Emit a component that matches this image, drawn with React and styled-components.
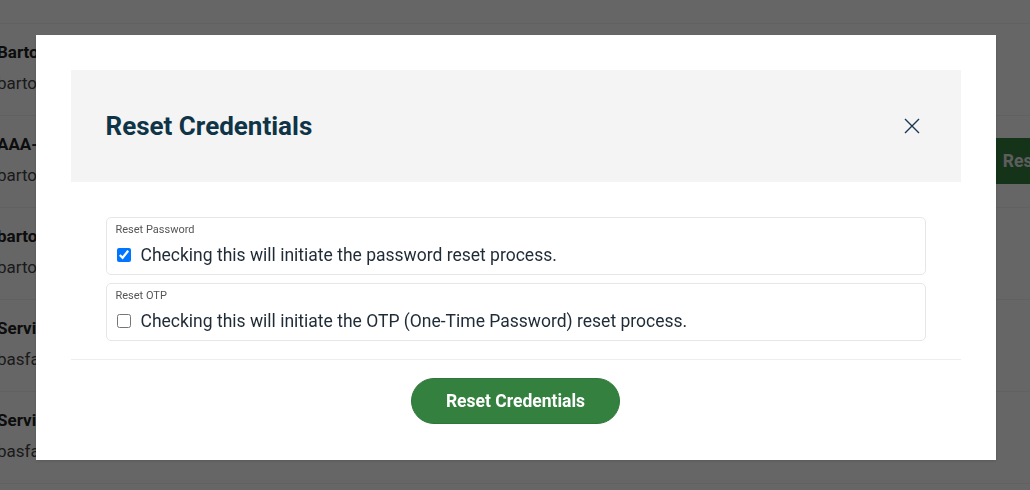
import React, { useState } from 'react';
import styled, { createGlobalStyle } from 'styled-components';

const GlobalStyle = createGlobalStyle`
  html, body {
    margin: 0;
    padding: 0;
    height: 100%;
    overflow: hidden;
    background: #fff;
    font-family: Roboto, "Liberation Sans", Arial, sans-serif;
  }
`;

const accounts = [
  { name: 'Bartosz Admin', email: 'bartosz.kowalski@gmail.com' },
  { name: 'Bartosz Kowalski', email: 'bartosz.kowalski@gmail.com' },
  { name: 'AAA-Bartosz Test', email: 'bartosz.test@gmail.com', action: true },
  { name: 'bartosz.user', email: 'bartosz.user@gmail.com' },
  { name: 'Service Account', email: 'basfagent.service@gmail.com' },
  { name: 'Service Agent', email: 'basfagent.support@gmail.com' },
];

const List = styled.main`
  margin-top: -68px;
  margin-left: -3px;
  margin-right: -130px;
`;

const Row = styled.div`
  height: 92px;
  box-sizing: border-box;
  padding-top: 16px;
  border-bottom: 1px solid #f2f2f2;
  display: flex;
  justify-content: space-between;
  align-items: flex-start;
`;

const Info = styled.div`
  display: flex;
  flex-direction: column;
  gap: 7px;
`;

const Name = styled.div`
  font-size: 17px;
  line-height: 24px;
  font-weight: 700;
  color: #222;
`;

const Email = styled.div`
  font-size: 17px;
  line-height: 24px;
  color: #444;
`;

const RowButton = styled.button`
  margin-top: 6px;
  height: 46px;
  padding: 0 18px;
  border: none;
  background: #34803f;
  color: #e8e8e8;
  font-family: inherit;
  font-size: 17.5px;
  font-weight: 700;
`;

const Overlay = styled.div`
  position: fixed;
  inset: 0;
  background: rgba(0, 0, 0, 0.6);
  display: flex;
  justify-content: center;
  align-items: flex-start;
  padding-top: 35px;
  padding-left: 1px;
`;

const Modal = styled.section`
  width: 960px;
  box-sizing: border-box;
  background: #fff;
  padding: 35px 35px 36px;
  box-shadow: 0 1px 3px rgba(0, 0, 0, 0.15);
`;

const Header = styled.header`
  height: 112px;
  box-sizing: border-box;
  background: #f4f4f4;
  padding: 0 35px;
  display: flex;
  align-items: center;
  justify-content: space-between;
`;

const Title = styled.h2`
  margin: 0;
  font-size: 26px;
  font-weight: 700;
  color: #0f3447;
`;

const CloseButton = styled.button`
  background: none;
  border: none;
  padding: 0;
  margin-right: 5px;
  width: 18px;
  height: 18px;
  display: flex;
  align-items: center;
  justify-content: center;
  cursor: pointer;
`;

const Body = styled.div`
  margin-top: 35px;
  padding: 0 35px;
  display: flex;
  flex-direction: column;
  gap: 8px;
`;

const OptionBox = styled.label`
  display: block;
  border: 1px solid #e6e6e6;
  border-radius: 5px;
  padding: 5px 9px 6px;
`;

const OptionLabel = styled.div`
  font-size: 11px;
  line-height: 14px;
  color: #555;
`;

const OptionRow = styled.div`
  margin-top: 5px;
  display: flex;
  align-items: center;
  gap: 10px;
  font-size: 17.5px;
  line-height: 26px;
  color: #1f2b36;
`;

const Check = styled.input`
  width: 14px;
  height: 14px;
  margin: 0 0 0 1px;
  accent-color: #0075ff;
`;

const Divider = styled.hr`
  margin: 18px 0 0;
  border: none;
  border-top: 1px solid #eeeeee;
`;

const Footer = styled.div`
  margin-top: 18px;
  display: flex;
  justify-content: center;
`;

const PrimaryButton = styled.button`
  height: 46px;
  padding: 0 34px;
  border: 1px solid #2f7639;
  border-radius: 23px;
  background: #34803f;
  color: #fff;
  font-family: inherit;
  font-size: 17.5px;
  font-weight: 700;
  cursor: pointer;
`;

const App = () => {
  const [resetPassword, setResetPassword] = useState(true);
  const [resetOtp, setResetOtp] = useState(false);

  return (
    <>
      <GlobalStyle />
      <List>
        {accounts.map((a) => (
          <Row key={a.name}>
            <Info>
              <Name>{a.name}</Name>
              <Email>{a.email}</Email>
            </Info>
            {a.action && <RowButton>Reset Credentials</RowButton>}
          </Row>
        ))}
      </List>
      <Overlay>
        <Modal role='dialog'>
          <Header>
            <Title>Reset Credentials</Title>
            <CloseButton aria-label='close'>
              <svg width='18' height='18' viewBox='0 0 18 18'>
                <path d='M2 2 L16 16 M16 2 L2 16' stroke='#1b3550' strokeWidth='1.4' fill='none' />
              </svg>
            </CloseButton>
          </Header>
          <Body>
            <OptionBox>
              <OptionLabel>Reset Password</OptionLabel>
              <OptionRow>
                <Check
                  type='checkbox'
                  checked={resetPassword}
                  onChange={(e) => setResetPassword(e.target.checked)}
                />
                Checking this will initiate the password reset process.
              </OptionRow>
            </OptionBox>
            <OptionBox>
              <OptionLabel>Reset OTP</OptionLabel>
              <OptionRow>
                <Check
                  type='checkbox'
                  checked={resetOtp}
                  onChange={(e) => setResetOtp(e.target.checked)}
                />
                Checking this will initiate the OTP (One-Time Password) reset process.
              </OptionRow>
            </OptionBox>
          </Body>
          <Divider />
          <Footer>
            <PrimaryButton>Reset Credentials</PrimaryButton>
          </Footer>
        </Modal>
      </Overlay>
    </>
  );
};

export default App;
